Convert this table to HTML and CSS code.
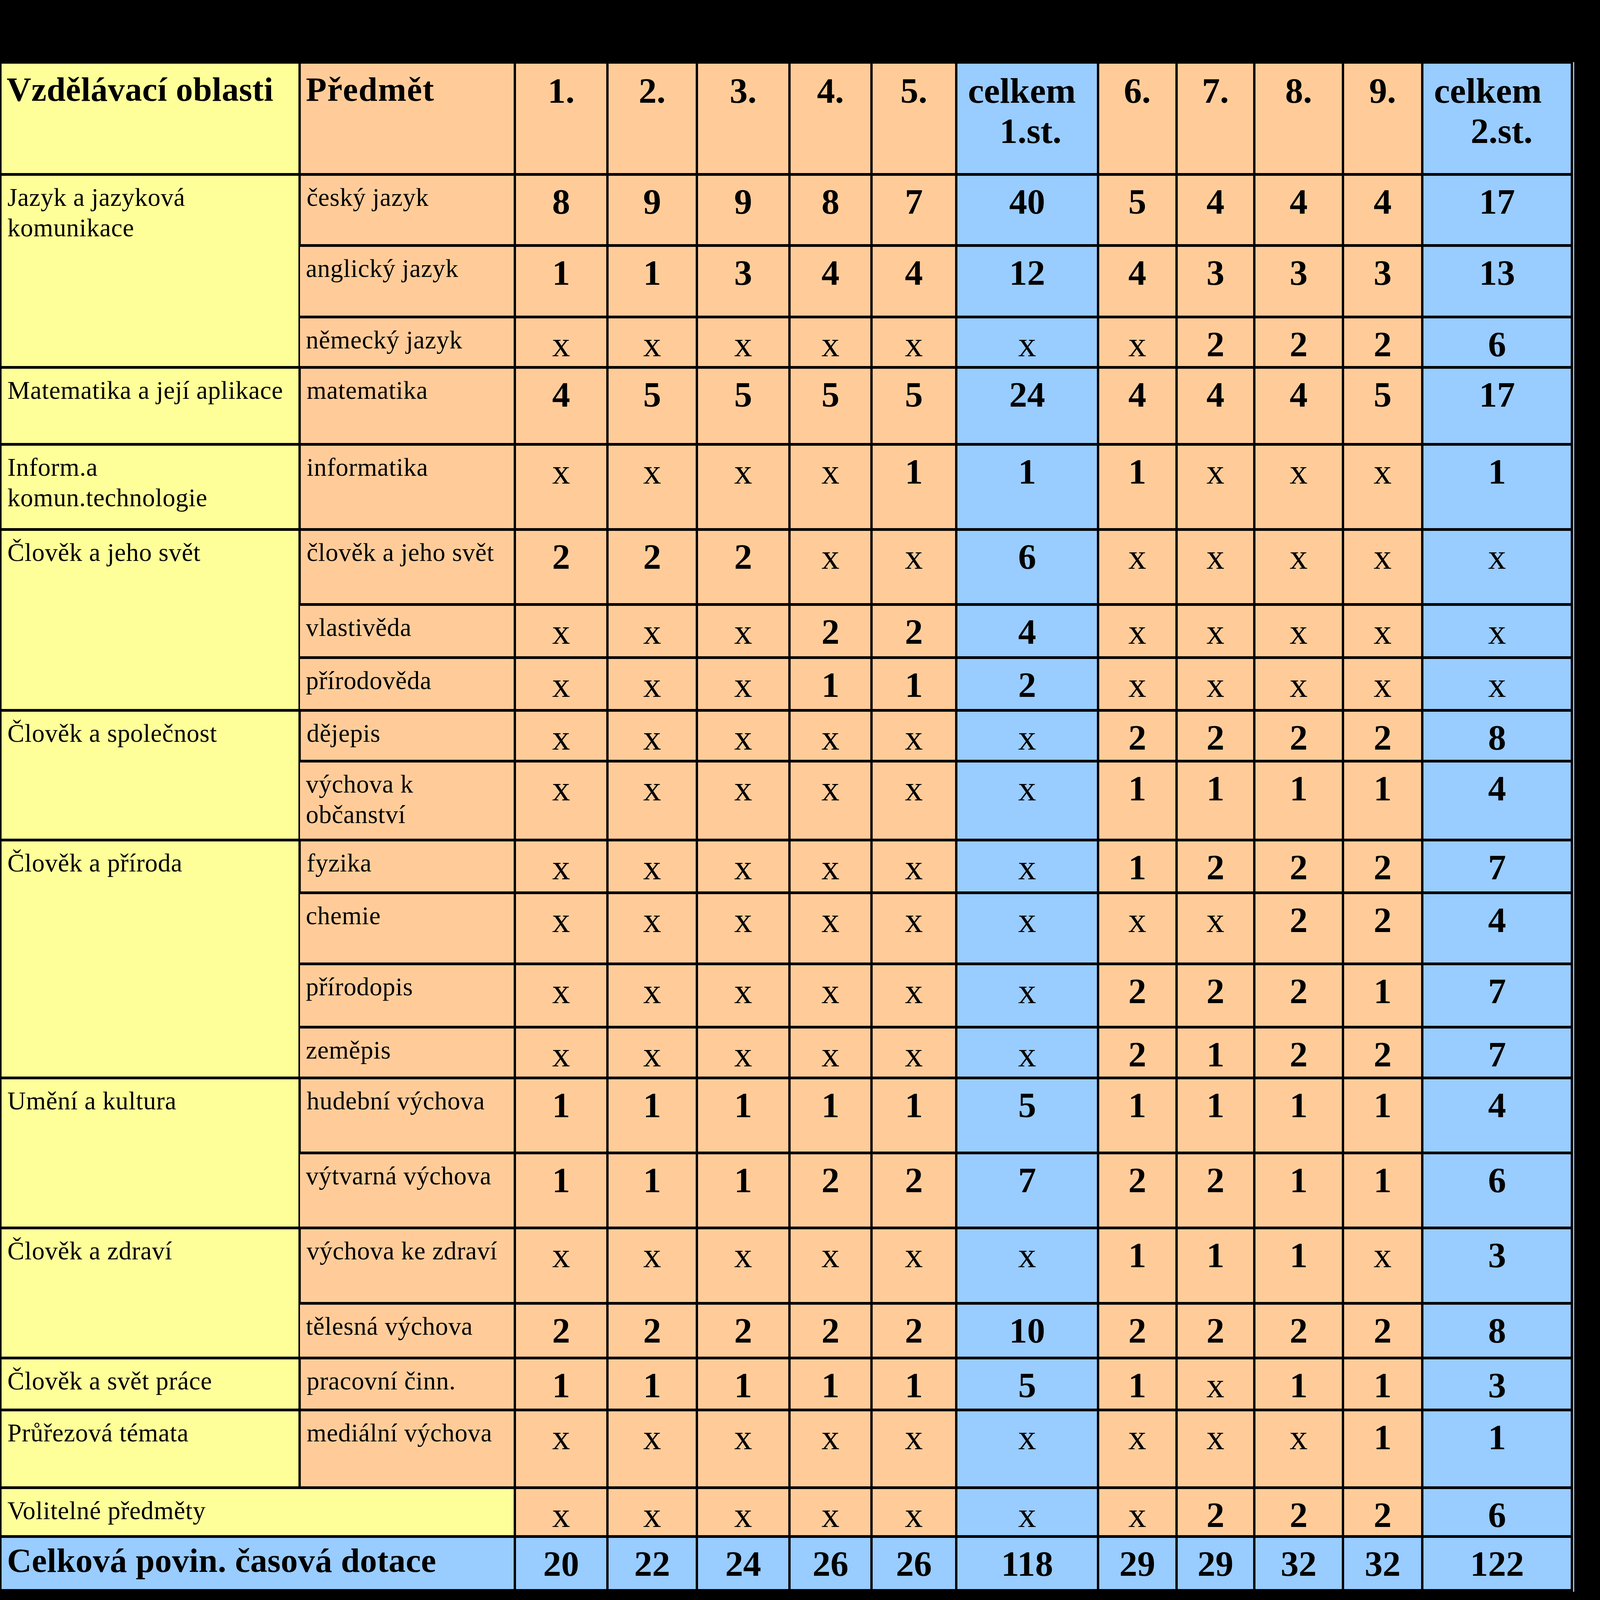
FILE: index.html
```html
<!DOCTYPE html>
<html lang="cs">
<head>
<meta charset="utf-8">
<title>Učební plán</title>
<link rel="stylesheet" href="styles.css">
</head>
<body>
<table class="plan">
  <colgroup>
    <col class="w-area"><col class="w-subj"><col class="w-g1"><col class="w-g2"><col class="w-g3"><col class="w-g4"><col class="w-g5"><col class="w-t1"><col class="w-g6"><col class="w-g7"><col class="w-g8"><col class="w-g9"><col class="w-t2">
  </colgroup>
  <tbody>
    <tr class="r0">
      <td class="area hd-text">Vzdělávací oblasti</td>
      <td class="subj hd-text">Předmět</td>
      <td class="g hd">1.</td><td class="g hd">2.</td><td class="g hd">3.</td><td class="g hd">4.</td><td class="g hd">5.</td>
      <td class="t hd hd-total">celkem<br><span class="st1">1.st.</span></td>
      <td class="g hd">6.</td><td class="g hd">7.</td><td class="g hd">8.</td><td class="g hd">9.</td>
      <td class="t hd hd-total">celkem<br><span class="st2">2.st.</span></td>
    </tr>
    <tr class="r1">
      <td class="area" rowspan="3">Jazyk a jazyková<br>komunikace</td>
      <td class="subj">český jazyk</td>
      <td class="g">8</td><td class="g">9</td><td class="g">9</td><td class="g">8</td><td class="g">7</td><td class="t">40</td>
      <td class="g">5</td><td class="g">4</td><td class="g">4</td><td class="g">4</td><td class="t">17</td>
    </tr>
    <tr class="r2">
      <td class="subj">anglický jazyk</td>
      <td class="g">1</td><td class="g">1</td><td class="g">3</td><td class="g">4</td><td class="g">4</td><td class="t">12</td>
      <td class="g">4</td><td class="g">3</td><td class="g">3</td><td class="g">3</td><td class="t">13</td>
    </tr>
    <tr class="r3">
      <td class="subj">německý jazyk</td>
      <td class="g x">x</td><td class="g x">x</td><td class="g x">x</td><td class="g x">x</td><td class="g x">x</td><td class="t x">x</td>
      <td class="g x">x</td><td class="g">2</td><td class="g">2</td><td class="g">2</td><td class="t">6</td>
    </tr>
    <tr class="r4">
      <td class="area">Matematika a její aplikace</td>
      <td class="subj">matematika</td>
      <td class="g">4</td><td class="g">5</td><td class="g">5</td><td class="g">5</td><td class="g">5</td><td class="t">24</td>
      <td class="g">4</td><td class="g">4</td><td class="g">4</td><td class="g">5</td><td class="t">17</td>
    </tr>
    <tr class="r5">
      <td class="area">Inform.a<br>komun.technologie</td>
      <td class="subj">informatika</td>
      <td class="g x">x</td><td class="g x">x</td><td class="g x">x</td><td class="g x">x</td><td class="g">1</td><td class="t">1</td>
      <td class="g">1</td><td class="g x">x</td><td class="g x">x</td><td class="g x">x</td><td class="t">1</td>
    </tr>
    <tr class="r6">
      <td class="area" rowspan="3">Člověk a jeho svět</td>
      <td class="subj">člověk a jeho svět</td>
      <td class="g">2</td><td class="g">2</td><td class="g">2</td><td class="g x">x</td><td class="g x">x</td><td class="t">6</td>
      <td class="g x">x</td><td class="g x">x</td><td class="g x">x</td><td class="g x">x</td><td class="t x">x</td>
    </tr>
    <tr class="r7">
      <td class="subj">vlastivěda</td>
      <td class="g x">x</td><td class="g x">x</td><td class="g x">x</td><td class="g">2</td><td class="g">2</td><td class="t">4</td>
      <td class="g x">x</td><td class="g x">x</td><td class="g x">x</td><td class="g x">x</td><td class="t x">x</td>
    </tr>
    <tr class="r8">
      <td class="subj">přírodověda</td>
      <td class="g x">x</td><td class="g x">x</td><td class="g x">x</td><td class="g">1</td><td class="g">1</td><td class="t">2</td>
      <td class="g x">x</td><td class="g x">x</td><td class="g x">x</td><td class="g x">x</td><td class="t x">x</td>
    </tr>
    <tr class="r9">
      <td class="area" rowspan="2">Člověk a společnost</td>
      <td class="subj">dějepis</td>
      <td class="g x">x</td><td class="g x">x</td><td class="g x">x</td><td class="g x">x</td><td class="g x">x</td><td class="t x">x</td>
      <td class="g">2</td><td class="g">2</td><td class="g">2</td><td class="g">2</td><td class="t">8</td>
    </tr>
    <tr class="r10">
      <td class="subj">výchova k<br>občanství</td>
      <td class="g x">x</td><td class="g x">x</td><td class="g x">x</td><td class="g x">x</td><td class="g x">x</td><td class="t x">x</td>
      <td class="g">1</td><td class="g">1</td><td class="g">1</td><td class="g">1</td><td class="t">4</td>
    </tr>
    <tr class="r11">
      <td class="area" rowspan="4">Člověk a příroda</td>
      <td class="subj">fyzika</td>
      <td class="g x">x</td><td class="g x">x</td><td class="g x">x</td><td class="g x">x</td><td class="g x">x</td><td class="t x">x</td>
      <td class="g">1</td><td class="g">2</td><td class="g">2</td><td class="g">2</td><td class="t">7</td>
    </tr>
    <tr class="r12">
      <td class="subj">chemie</td>
      <td class="g x">x</td><td class="g x">x</td><td class="g x">x</td><td class="g x">x</td><td class="g x">x</td><td class="t x">x</td>
      <td class="g x">x</td><td class="g x">x</td><td class="g">2</td><td class="g">2</td><td class="t">4</td>
    </tr>
    <tr class="r13">
      <td class="subj">přírodopis</td>
      <td class="g x">x</td><td class="g x">x</td><td class="g x">x</td><td class="g x">x</td><td class="g x">x</td><td class="t x">x</td>
      <td class="g">2</td><td class="g">2</td><td class="g">2</td><td class="g">1</td><td class="t">7</td>
    </tr>
    <tr class="r14">
      <td class="subj">zeměpis</td>
      <td class="g x">x</td><td class="g x">x</td><td class="g x">x</td><td class="g x">x</td><td class="g x">x</td><td class="t x">x</td>
      <td class="g">2</td><td class="g">1</td><td class="g">2</td><td class="g">2</td><td class="t">7</td>
    </tr>
    <tr class="r15">
      <td class="area" rowspan="2">Umění a kultura</td>
      <td class="subj">hudební výchova</td>
      <td class="g">1</td><td class="g">1</td><td class="g">1</td><td class="g">1</td><td class="g">1</td><td class="t">5</td>
      <td class="g">1</td><td class="g">1</td><td class="g">1</td><td class="g">1</td><td class="t">4</td>
    </tr>
    <tr class="r16">
      <td class="subj">výtvarná výchova</td>
      <td class="g">1</td><td class="g">1</td><td class="g">1</td><td class="g">2</td><td class="g">2</td><td class="t">7</td>
      <td class="g">2</td><td class="g">2</td><td class="g">1</td><td class="g">1</td><td class="t">6</td>
    </tr>
    <tr class="r17">
      <td class="area" rowspan="2">Člověk a zdraví</td>
      <td class="subj">výchova ke zdraví</td>
      <td class="g x">x</td><td class="g x">x</td><td class="g x">x</td><td class="g x">x</td><td class="g x">x</td><td class="t x">x</td>
      <td class="g">1</td><td class="g">1</td><td class="g">1</td><td class="g x">x</td><td class="t">3</td>
    </tr>
    <tr class="r18">
      <td class="subj">tělesná výchova</td>
      <td class="g">2</td><td class="g">2</td><td class="g">2</td><td class="g">2</td><td class="g">2</td><td class="t">10</td>
      <td class="g">2</td><td class="g">2</td><td class="g">2</td><td class="g">2</td><td class="t">8</td>
    </tr>
    <tr class="r19">
      <td class="area">Člověk a svět práce</td>
      <td class="subj">pracovní činn.</td>
      <td class="g">1</td><td class="g">1</td><td class="g">1</td><td class="g">1</td><td class="g">1</td><td class="t">5</td>
      <td class="g">1</td><td class="g x">x</td><td class="g">1</td><td class="g">1</td><td class="t">3</td>
    </tr>
    <tr class="r20">
      <td class="area">Průřezová témata</td>
      <td class="subj">mediální výchova</td>
      <td class="g x">x</td><td class="g x">x</td><td class="g x">x</td><td class="g x">x</td><td class="g x">x</td><td class="t x">x</td>
      <td class="g x">x</td><td class="g x">x</td><td class="g x">x</td><td class="g">1</td><td class="t">1</td>
    </tr>
    <tr class="r21">
      <td class="area" colspan="2">Volitelné předměty</td>
      <td class="g x">x</td><td class="g x">x</td><td class="g x">x</td><td class="g x">x</td><td class="g x">x</td><td class="t x">x</td>
      <td class="g x">x</td><td class="g">2</td><td class="g">2</td><td class="g">2</td><td class="t">6</td>
    </tr>
    <tr class="r22">
      <td class="t sum-label" colspan="2">Celková povin. časová dotace</td>
      <td class="t">20</td><td class="t">22</td><td class="t">24</td><td class="t">26</td><td class="t">26</td><td class="t">118</td>
      <td class="t">29</td><td class="t">29</td><td class="t">32</td><td class="t">32</td><td class="t">122</td>
    </tr>
  </tbody>
</table>
</body>
</html>
```

FILE: styles.css
```css
html, body {
  margin: 0;
  padding: 0;
  background: #000;
}

body {
  overflow: hidden;
  font-family: "Liberation Serif", "Times New Roman", serif;
  color: #000;
}

.plan {
  border-collapse: separate;
  border-spacing: 0;
  table-layout: fixed;
  box-sizing: border-box;
  width: 4027px;
  margin-top: 156px;
  border-right: 6px solid #000;
  border-bottom: 7px solid #000;
  box-shadow: 3px 3px 0 #99ccff;
}

/* column widths (border-box, left border included) */
.w-area { width: 764px; }
.w-subj { width: 551px; }
.w-g1 { width: 237px; }
.w-g2 { width: 229px; }
.w-g3 { width: 237px; }
.w-g4 { width: 210px; }
.w-g5 { width: 217px; }
.w-t1 { width: 363px; }
.w-g6 { width: 201px; }
.w-g7 { width: 199px; }
.w-g8 { width: 227px; }
.w-g9 { width: 203px; }
.w-t2 { width: 383px; }

/* row heights */
.r0 { height: 287px; }
.r1 { height: 182px; }
.r2 { height: 183px; }
.r3 { height: 129px; }
.r4 { height: 197px; }
.r5 { height: 218px; }
.r6 { height: 192px; }
.r7 { height: 136px; }
.r8 { height: 135px; }
.r9 { height: 130px; }
.r10 { height: 202px; }
.r11 { height: 135px; }
.r12 { height: 182px; }
.r13 { height: 162px; }
.r14 { height: 130px; }
.r15 { height: 192px; }
.r16 { height: 192px; }
.r17 { height: 193px; }
.r18 { height: 140px; }
.r19 { height: 133px; }
.r20 { height: 199px; }
.r21 { height: 125px; }
.r22 { height: 138px; }

.plan td {
  border-top: 7px solid #000;
  border-left: 6px solid #000;
  padding: 20px 0 0 0;
  vertical-align: top;
  text-align: center;
  font-size: 92px;
  line-height: 92px;
  font-weight: bold;
  white-space: nowrap;
  overflow: hidden;
}

.plan td:first-child {
  border-left-width: 4px;
}

.g { background: #ffcc99; }
.t { background: #99ccff; }

.plan td.x { font-weight: normal; }

.area { background: #ffff99; }
.subj { background: #ffcc99; }

.plan .area,
.plan .subj {
  padding: 16px 5px 0 15px;
  font-size: 65px;
  line-height: 78px;
  font-weight: normal;
  letter-spacing: 0.7px;
  text-align: left;
}

/* header row */
.plan .hd-text {
  font-size: 87px;
  line-height: 103px;
  font-weight: bold;
  letter-spacing: 0.5px;
  padding: 14px 5px 0 13px;
}

.plan .subj.hd-text {
  letter-spacing: 1.5px;
}

.plan .hd {
  line-height: 103px;
  padding-top: 18px;
}

.plan .hd-total {
  text-align: left;
  padding-left: 27px;
}

.st1 { margin-left: 81px; }
.st2 { margin-left: 94px; }

/* total row label */
.plan .sum-label {
  text-align: left;
  font-size: 87px;
  line-height: 92px;
  letter-spacing: 0.4px;
  padding: 12px 5px 0 14px;
}
```
